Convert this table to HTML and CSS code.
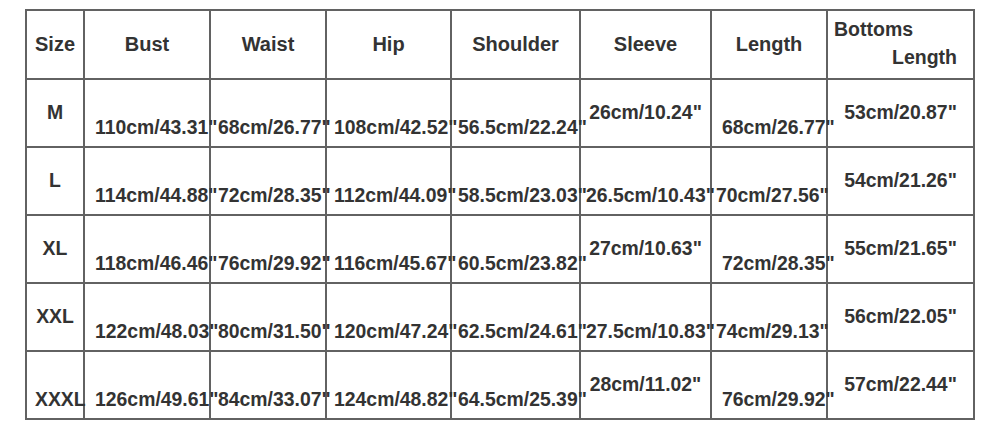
FILE: index.html
```html
<!DOCTYPE html>
<html lang="en">
<head>
<meta charset="utf-8">
<title>Size Chart</title>
<link rel="stylesheet" href="styles.css">
</head>
<body>
<table class="size-table">
  <colgroup>
    <col class="c-size">
    <col class="c-bust">
    <col class="c-waist">
    <col class="c-hip">
    <col class="c-shoulder">
    <col class="c-sleeve">
    <col class="c-length">
    <col class="c-bottoms">
  </colgroup>
  <thead>
    <tr class="head">
      <th>Size</th>
      <th>Bust</th>
      <th>Waist</th>
      <th>Hip</th>
      <th>Shoulder</th>
      <th>Sleeve</th>
      <th>Length</th>
      <th class="two"><div class="l1">Bottoms</div><div class="l2">Length</div></th>
    </tr>
  </thead>
  <tbody>
    <tr class="row">
      <td><div class="up">M</div></td>
      <td><div class="lo pb">110cm/43.31"</div></td>
      <td><div class="lo pw">68cm/26.77"</div></td>
      <td><div class="lo ph">108cm/42.52"</div></td>
      <td><div class="lo ps">56.5cm/22.24"</div></td>
      <td><div class="up">26cm/10.24"</div></td>
      <td><div class="lo pl">68cm/26.77"</div></td>
      <td><div class="up">53cm/20.87"</div></td>
    </tr>
    <tr class="row">
      <td><div class="up">L</div></td>
      <td><div class="lo pb">114cm/44.88"</div></td>
      <td><div class="lo pw">72cm/28.35"</div></td>
      <td><div class="lo ph">112cm/44.09"</div></td>
      <td><div class="lo ps">58.5cm/23.03"</div></td>
      <td><div class="lo pv">26.5cm/10.43"</div></td>
      <td><div class="lo pl2">70cm/27.56"</div></td>
      <td><div class="up">54cm/21.26"</div></td>
    </tr>
    <tr class="row">
      <td><div class="up">XL</div></td>
      <td><div class="lo pb">118cm/46.46"</div></td>
      <td><div class="lo pw">76cm/29.92"</div></td>
      <td><div class="lo ph">116cm/45.67"</div></td>
      <td><div class="lo ps">60.5cm/23.82"</div></td>
      <td><div class="up">27cm/10.63"</div></td>
      <td><div class="lo pl">72cm/28.35"</div></td>
      <td><div class="up">55cm/21.65"</div></td>
    </tr>
    <tr class="row">
      <td><div class="up">XXL</div></td>
      <td><div class="lo pb">122cm/48.03"</div></td>
      <td><div class="lo pw">80cm/31.50"</div></td>
      <td><div class="lo ph">120cm/47.24"</div></td>
      <td><div class="lo ps">62.5cm/24.61"</div></td>
      <td><div class="lo pv">27.5cm/10.83"</div></td>
      <td><div class="lo pl2">74cm/29.13"</div></td>
      <td><div class="up">56cm/22.05"</div></td>
    </tr>
    <tr class="row">
      <td><div class="lo px">XXXL</div></td>
      <td><div class="lo pb">126cm/49.61"</div></td>
      <td><div class="lo pw">84cm/33.07"</div></td>
      <td><div class="lo ph">124cm/48.82"</div></td>
      <td><div class="lo ps">64.5cm/25.39"</div></td>
      <td><div class="up">28cm/11.02"</div></td>
      <td><div class="lo pl">76cm/29.92"</div></td>
      <td><div class="up">57cm/22.44"</div></td>
    </tr>
  </tbody>
</table>
</body>
</html>
```

FILE: styles.css
```css
html, body {
  margin: 0;
  background: #ffffff;
}

body {
  padding: 9px 0 0 25px;
  font-family: "Liberation Sans", Arial, sans-serif;
  font-weight: bold;
  font-size: 19.4px;
  line-height: 22px;
  color: #333333;
}

.size-table {
  border-collapse: separate;
  border-spacing: 0;
  table-layout: fixed;
  width: 950px;
}

.c-size { width: 60px; }
.c-bust { width: 126px; }
.c-waist { width: 116px; }
.c-hip { width: 125px; }
.c-shoulder { width: 129px; }
.c-sleeve { width: 131px; }
.c-length { width: 116px; }
.c-bottoms { width: 147px; }

.size-table th,
.size-table td {
  padding: 0;
  border-right: 2px solid #626262;
  border-bottom: 2px solid #626262;
  vertical-align: middle;
  text-align: center;
  font-weight: bold;
  white-space: nowrap;
  overflow: visible;
}

.size-table th:first-child,
.size-table td:first-child {
  border-left: 2px solid #626262;
}

.size-table .head th {
  border-top: 2px solid #626262;
  padding-bottom: 2px;
  font-size: 20px;
}

.head { height: 71px; }
.row { height: 68px; }

.size-table .head th.two {
  font-size: 19.5px;
  line-height: 27.5px;
}
.two .l1 {
  text-align: left;
  padding-left: 6px;
}
.two .l2 {
  text-align: right;
  padding-right: 16px;
}

.up {
  padding-bottom: 2px;
}

.lo {
  padding-top: 27px;
  text-align: left;
}

.pb { padding-left: 10px; }
.pw { padding-left: 7px; }
.ph { padding-left: 7px; }
.ps { padding-left: 6px; }
.pv { padding-left: 5px; }
.pl { padding-left: 10px; }
.pl2 { padding-left: 4px; }
.px { padding-left: 8px; }
```
